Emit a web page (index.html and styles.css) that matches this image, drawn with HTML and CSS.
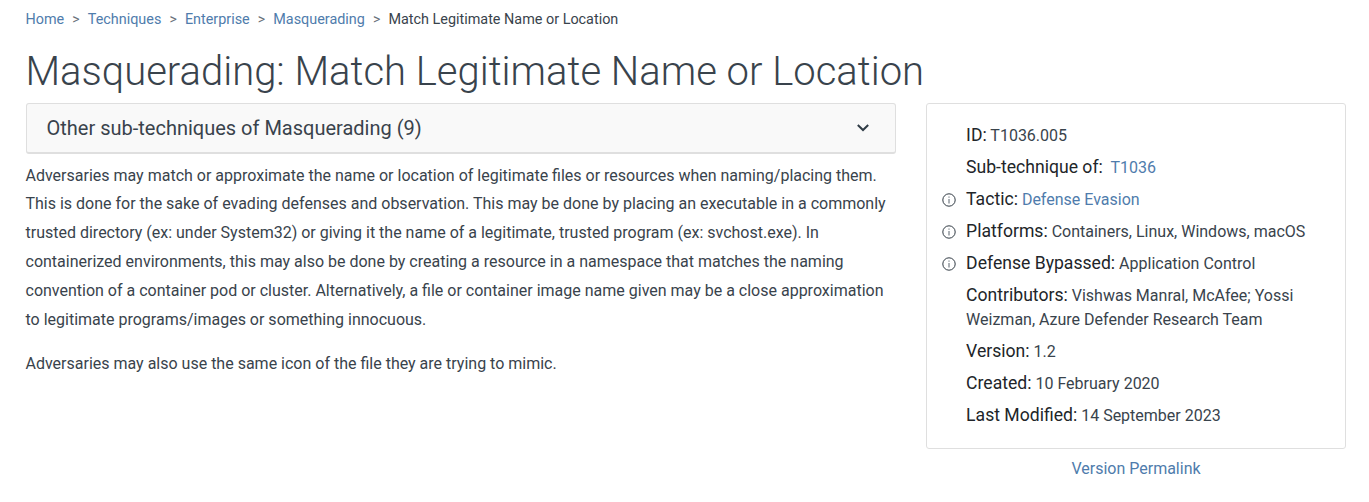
FILE: index.html
```html
<!DOCTYPE html>
<html lang="en">
<head>
<meta charset="utf-8">
<title>Masquerading: Match Legitimate Name or Location</title>
<link rel="stylesheet" href="styles.css">
</head>
<body>
<nav class="breadcrumb"><a>Home</a><i>&gt;</i><a>Techniques</a><i>&gt;</i><a>Enterprise</a><i>&gt;</i><a>Masquerading</a><i>&gt;</i><span>Match Legitimate Name or Location</span></nav>
<h1>Masquerading: Match Legitimate Name or Location</h1>
<main class="columns">
<section class="main-col">
<div class="subtechniques"><span>Other sub-techniques of Masquerading (9)</span><svg class="chevron" width="14" height="10" viewBox="0 0 14 10"><path d="M1.8 2 7 7 12.2 2" fill="none" stroke="#303c46" stroke-width="2"/></svg></div>
<div class="description">
<p>Adversaries may match or approximate the name or location of legitimate files or resources when naming/placing them.<br>This is done for the sake of evading defenses and observation. This may be done by placing an executable in a commonly<br>trusted directory (ex: under System32) or giving it the name of a legitimate, trusted program (ex: svchost.exe). In<br>containerized environments, this may also be done by creating a resource in a namespace that matches the naming<br>convention of a container pod or cluster. Alternatively, a file or container image name given may be a close approximation<br>to legitimate programs/images or something innocuous.</p>
<p>Adversaries may also use the same icon of the file they are trying to mimic.</p>
</div>
</section>
<aside class="side">
<div class="card">
<div class="row"><span class="icon"></span><div><b>ID:</b> T1036.005</div></div>
<div class="row"><span class="icon"></span><div><b>Sub-technique of:</b>&nbsp; <a>T1036</a></div></div>
<div class="row"><span class="icon"><svg width="14" height="14" viewBox="0 0 14 14"><circle cx="7" cy="7" r="6.2" fill="none" stroke="#303a43"/><path d="M7 6v4.5M7 3.5v1.2" fill="none" stroke="#59636c"/></svg></span><div><b>Tactic:</b> <a>Defense Evasion</a></div></div>
<div class="row"><span class="icon"><svg width="14" height="14" viewBox="0 0 14 14"><circle cx="7" cy="7" r="6.2" fill="none" stroke="#303a43"/><path d="M7 6v4.5M7 3.5v1.2" fill="none" stroke="#59636c"/></svg></span><div><b>Platforms:</b> Containers, Linux, Windows, macOS</div></div>
<div class="row"><span class="icon"><svg width="14" height="14" viewBox="0 0 14 14"><circle cx="7" cy="7" r="6.2" fill="none" stroke="#303a43"/><path d="M7 6v4.5M7 3.5v1.2" fill="none" stroke="#59636c"/></svg></span><div><b>Defense Bypassed:</b> Application Control</div></div>
<div class="row"><span class="icon"></span><div><b>Contributors:</b> Vishwas Manral, McAfee; Yossi<br>Weizman, Azure Defender Research Team</div></div>
<div class="row"><span class="icon"></span><div><b>Version:</b> 1.2</div></div>
<div class="row"><span class="icon"></span><div><b>Created:</b> 10 February 2020</div></div>
<div class="row"><span class="icon"></span><div><b>Last Modified:</b> 14 September 2023</div></div>
</div>
<a class="permalink">Version Permalink</a>
</aside>
</main>
</body>
</html>
```
FILE: styles.css
```css
* { box-sizing: border-box; }
body { margin: 0; padding: 8px 23px 0 25.5px; background: #fff; color: #39434c; font: 16px/24px Roboto, sans-serif; }
a { color: #4f7cac; }
.breadcrumb { font-size: 14.4px; line-height: 22px; white-space: nowrap; }
.breadcrumb i { font-style: normal; font-size: 14px; margin: 0 8.1px; color: #68717a; }
h1 { margin: 17px 0 7px; font-size: 40px; line-height: 48px; font-weight: 300; white-space: nowrap; }
.columns { display: flex; gap: 30px; }
.main-col { width: 870px; }
.subtechniques { height: 51px; padding: 0 25px 0 20px; display: flex; align-items: center; justify-content: space-between; background: #f9f9f9; border: 1px solid #dfdfdf; border-bottom: 2px solid #dfdfdf; border-radius: 3px; font-size: 20px; }
.description { padding-top: 7.6px; line-height: 28.8px; white-space: nowrap; }
.description p { margin: 0 0 16px; }
.side { width: 420px; display: flex; flex-direction: column; align-items: center; }
.card { width: 420px; height: 346px; padding: 20px 0 0 15px; border: 1px solid #dfdfdf; border-radius: 3px; white-space: nowrap; }
.row { display: flex; margin-bottom: 8px; }
.icon { width: 24.6px; height: 24px; padding-top: 5px; display: flex; }
.row b { font-size: 17.6px; font-weight: 400; line-height: 20px; color: #212529; }
.permalink { margin: 8px 0 0 1px; }
```
